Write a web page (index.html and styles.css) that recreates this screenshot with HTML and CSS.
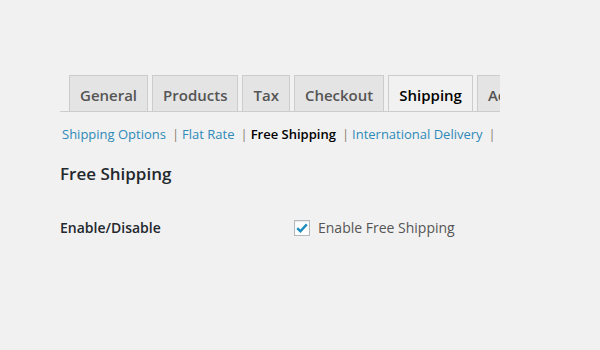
FILE: index.html
```html
<!DOCTYPE html>
<html lang="en">
<head>
    <meta charset="UTF-8">
    <title>Shipping Settings</title>
    <link rel="stylesheet" href="styles.css">
</head>
<body>
    <div class="wrap">
        <div class="nav-wrapper">
            <a class="nav-tab" href="#">General</a>
            <a class="nav-tab" href="#">Products</a>
            <a class="nav-tab" href="#">Tax</a>
            <a class="nav-tab" href="#">Checkout</a>
            <a class="nav-tab nav-tab-active" href="#">Shipping</a>
            <a class="nav-tab" href="#">Accounts</a>
        </div>

        <ul class="subsubsub">
            <li><a href="#">Shipping Options</a><span class="sep">|</span></li>
            <li><a href="#">Flat Rate</a><span class="sep">|</span></li>
            <li><a class="current" href="#">Free Shipping</a><span class="sep">|</span></li>
            <li><a href="#">International Delivery</a><span class="sep">|</span></li>
        </ul>

        <h2 class="section-title">Free Shipping</h2>

        <div class="form-row">
            <div class="form-label">Enable/Disable</div>
            <label class="form-field">
                <span class="checkbox">
                    <svg width="12" height="10" viewBox="0 0 12 10"><path d="M1.2 5.2 L4.4 8.2 L10.8 1.4" fill="none" stroke="#1e8cbe" stroke-width="2.4"/></svg>
                </span>
                Enable Free Shipping
            </label>
        </div>
    </div>
</body>
</html>
```

FILE: styles.css
```css
* {
    margin: 0;
    padding: 0;
    box-sizing: border-box;
}

body {
    font-family: "Open Sans", sans-serif;
    background-color: #f1f1f1;
    color: #23282d;
}

.wrap {
    width: 440px;
    margin: 75px 0 0 60px;
}

/* tabs */
.nav-wrapper {
    display: flex;
    gap: 4px;
    padding-left: 9px;
    border-bottom: 1px solid #ccc;
    overflow: hidden;
    white-space: nowrap;
}

.nav-tab {
    flex: none;
    display: block;
    height: 37px;
    margin-bottom: -1px;
    padding: 0 10px;
    line-height: 38px;
    font-size: 15px;
    font-weight: 600;
    color: #555;
    text-decoration: none;
    background-color: #e4e4e4;
    border: 1px solid #ccc;
}

.nav-tab-active {
    color: #000;
    background-color: #f1f1f1;
    border-bottom-color: #f1f1f1;
}

/* sub links */
.subsubsub {
    list-style: none;
    display: flex;
    white-space: nowrap;
    margin: 12px 0 0 2px;
    font-size: 13px;
    line-height: 20px;
}

.subsubsub li {
    flex: none;
}

.subsubsub a {
    color: #2e8ab8;
    text-decoration: none;
}

.subsubsub a.current {
    color: #000;
    font-weight: 600;
}

.sep {
    color: #8f7d6e;
    margin: 0 3px 0 6px;
}

.section-title {
    margin-top: 18px;
    font-size: 17px;
    font-weight: 600;
    color: #23282d;
}

/* form */
.form-row {
    display: flex;
    align-items: center;
    margin-top: 33px;
}

.form-label {
    width: 234px;
    font-size: 14px;
    font-weight: 600;
    color: #23282d;
}

.form-field {
    display: flex;
    align-items: center;
    gap: 8px;
    font-size: 14px;
    color: #555;
}

.checkbox {
    width: 16px;
    height: 16px;
    display: flex;
    align-items: center;
    justify-content: center;
    background: #fff;
    border: 1px solid #b4b9be;
    box-shadow: inset 0 1px 2px rgba(0, 0, 0, 0.1);
}
```
